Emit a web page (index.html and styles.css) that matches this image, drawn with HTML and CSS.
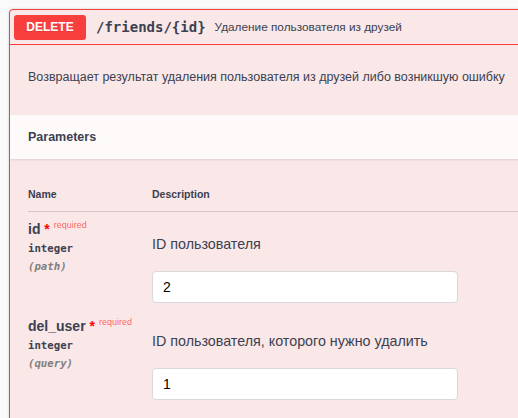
FILE: index.html
```html
<!DOCTYPE html>
<html lang="ru">
<head>
<meta charset="utf-8">
<title>DELETE /friends/{id}</title>
<link rel="stylesheet" href="styles.css">
</head>
<body>
<div class="opblock">
  <div class="summary">
    <span class="method">DELETE</span>
    <span class="path">/friends/{id}</span>
    <span class="summary-desc">Удаление пользователя из друзей</span>
  </div>
  <div class="desc">
    <p>Возвращает результат удаления пользователя из друзей либо возникшую ошибку</p>
  </div>
  <div class="section-header">
    <h4>Parameters</h4>
  </div>
  <div class="params">
    <div class="row head">
      <div>Name</div>
      <div>Description</div>
    </div>
    <div class="row param">
      <div class="col-name">
        <div class="pname">id<span class="star">&nbsp;*</span><span class="req">required</span></div>
        <div class="ptype">integer</div>
        <div class="pin">(path)</div>
      </div>
      <div class="col-desc">
        <p>ID пользователя</p>
        <input class="field" type="text" value="2">
      </div>
    </div>
    <div class="row param">
      <div class="col-name">
        <div class="pname">del_user<span class="star">&nbsp;*</span><span class="req">required</span></div>
        <div class="ptype">integer</div>
        <div class="pin">(query)</div>
      </div>
      <div class="col-desc">
        <p>ID пользователя, которого нужно удалить</p>
        <input class="field" type="text" value="1">
      </div>
    </div>
  </div>
</div>
</body>
</html>
```

FILE: styles.css
```css
html, body {
  margin: 0;
  background: #fafafa;
  overflow: hidden;
}
body {
  font-family: "Liberation Sans", Arial, sans-serif;
  color: #3b4151;
  padding: 9px 0 0 9px;
}
.opblock {
  width: 600px;
  min-height: 520px;
  border: 1px solid #f93e3e;
  border-radius: 4px;
  background: #fae7e7;
  box-shadow: 0 0 3px rgba(0, 0, 0, 0.19);
}
.summary {
  display: flex;
  align-items: center;
  height: 34px;
  padding: 0 4px;
  border-bottom: 1px solid #f93e3e;
}
.method {
  width: 72px;
  height: 25px;
  line-height: 25px;
  text-align: center;
  background: #f93e3e;
  color: #fff;
  font-weight: bold;
  font-size: 12px;
  border-radius: 3px;
  text-shadow: 0 1px 0 rgba(0, 0, 0, 0.1);
}
.path {
  margin-left: 10px;
  font-family: "DejaVu Sans Mono", monospace;
  font-weight: bold;
  font-size: 14px;
}
.summary-desc {
  margin-left: 9px;
  font-size: 11.8px;
}
.desc {
  padding: 24px 18px 29px;
}
.desc p {
  margin: 0;
  font-size: 12.5px;
  line-height: 17px;
}
.section-header {
  height: 44px;
  display: flex;
  align-items: center;
  padding: 0 18px;
  background: rgba(255, 255, 255, 0.8);
  box-shadow: 0 1px 2px rgba(0, 0, 0, 0.1);
}
.section-header h4 {
  margin: 0;
  font-size: 12.5px;
  font-weight: bold;
}
.params {
  padding-left: 18px;
}
.row {
  display: grid;
  grid-template-columns: 124px 1fr;
}
.head {
  padding: 28px 0 10px;
  font-size: 10.5px;
  line-height: 14px;
  font-weight: bold;
  border-bottom: 1px solid rgba(59, 65, 81, 0.2);
}
.param {
  padding: 8px 0 6px;
}
.pname {
  font-size: 14px;
  font-weight: bold;
  line-height: 18px;
}
.star {
  color: red;
}
.req {
  position: relative;
  top: -6px;
  padding-left: 4px;
  font-size: 9px;
  font-weight: normal;
  color: rgba(255, 0, 0, 0.6);
}
.ptype, .pin {
  font-family: "DejaVu Sans Mono", monospace;
  font-size: 10.7px;
  font-weight: 600;
  line-height: 18px;
}
.pin {
  font-style: italic;
  color: gray;
}
.col-desc p {
  margin: 16px 0 19px;
  font-size: 14.3px;
  line-height: 16px;
}
.field {
  display: block;
  width: 306px;
  height: 32px;
  box-sizing: border-box;
  border: 1px solid #d9d9d9;
  border-radius: 4px;
  padding: 0 10px;
  font-family: "Liberation Sans", Arial, sans-serif;
  font-size: 14px;
  color: #000;
  background: #fff;
  margin: 0;
}
```
